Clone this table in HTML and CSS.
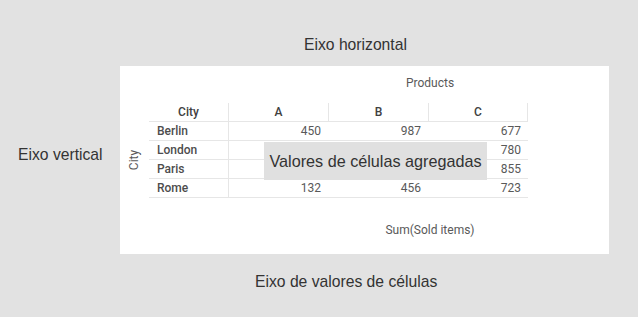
FILE: index.html
```html
<!DOCTYPE html>
<html>
<head>
<meta charset="utf-8">
<link rel="stylesheet" href="styles.css">
</head>
<body>
<div class="layout">
  <div class="corner"></div>
  <div class="top-label">Eixo horizontal</div>
  <div class="side-label">Eixo vertical</div>
  <div class="panel">
    <div class="products">Products</div>
    <div class="table-wrap">
      <div class="vlabel"><span>City</span></div>
      <div class="table">
        <div class="row head">
          <div class="c0">City</div><div class="c vl">A</div><div class="c vl">B</div><div class="c vl vr">C</div>
        </div>
        <div class="row">
          <div class="c0">Berlin</div><div class="c vl num">450</div><div class="c num">987</div><div class="c num">677</div>
        </div>
        <div class="row">
          <div class="c0">London</div><div class="c vl num"></div><div class="c num"></div><div class="c num">780</div>
        </div>
        <div class="row">
          <div class="c0">Paris</div><div class="c vl num"></div><div class="c num"></div><div class="c num">855</div>
        </div>
        <div class="row">
          <div class="c0">Rome</div><div class="c vl num">132</div><div class="c num">456</div><div class="c num">723</div>
        </div>
      </div>
    </div>
    <div class="measure">Sum(Sold items)</div>
    <div class="overlay">Valores de células agregadas</div>
  </div>
  <div class="corner"></div>
  <div class="bottom-label">Eixo de valores de células</div>
</div>
</body>
</html>
```
FILE: styles.css
```css
html, body {
  margin: 0;
  padding: 0;
}
body {
  background: #e2e2e2;
  width: 638px;
  height: 317px;
  overflow: hidden;
  font-family: "Liberation Sans", Arial, sans-serif;
  color: #333;
}
.layout {
  display: grid;
  grid-template-columns: 120px 489px;
  grid-template-rows: 66px 188px 63px;
}
.top-label {
  font-size: 15.7px;
  line-height: 18px;
  padding-top: 36px;
  padding-left: 184px;
}
.side-label {
  font-size: 15.7px;
  line-height: 18px;
  padding-top: 80px;
  padding-left: 18px;
}
.bottom-label {
  font-size: 15.7px;
  line-height: 18px;
  padding-top: 19px;
  padding-left: 135px;
}
.panel {
  background: #fff;
  position: relative;
  font-family: Roboto, "Liberation Sans", sans-serif;
  font-size: 12px;
  color: #595959;
}
.products {
  width: 200px;
  margin-left: 210px;
  text-align: center;
  line-height: 14px;
  padding-top: 10px;
  margin-bottom: 13px;
}
.table-wrap {
  display: flex;
}
.vlabel {
  width: 29px;
  display: flex;
  align-items: center;
  justify-content: center;
  padding-top: 19px;
}
.vlabel span {
  transform: rotate(-90deg);
  display: block;
  line-height: 14px;
}
.table {
  width: 379px;
}
.row {
  display: flex;
  height: 18px;
  border-bottom: 1px solid #e6e6e6;
  line-height: 19px;
}
.c0 {
  width: 79px;
  padding-left: 8px;
  box-sizing: border-box;
  font-weight: 500;
  color: #4d4d4d;
}
.c {
  width: 100px;
  box-sizing: border-box;
}
.head .c0 {
  text-align: center;
  padding-left: 0;
  color: #404040;
}
.head .c {
  text-align: center;
  font-weight: 500;
  color: #404040;
}
.vl {
  border-left: 1px solid #e6e6e6;
}
.vr {
  border-right: 1px solid #e6e6e6;
}
.num {
  text-align: right;
  padding-right: 7px;
}
.measure {
  width: 200px;
  margin-left: 210px;
  text-align: center;
  line-height: 14px;
  margin-top: 25px;
}
.overlay {
  position: absolute;
  left: 144px;
  top: 76px;
  width: 223px;
  height: 38px;
  background: #e0e0e0;
  color: #333;
  font-family: "Liberation Sans", Arial, sans-serif;
  font-size: 16.2px;
  display: flex;
  align-items: center;
  justify-content: center;
}
```
